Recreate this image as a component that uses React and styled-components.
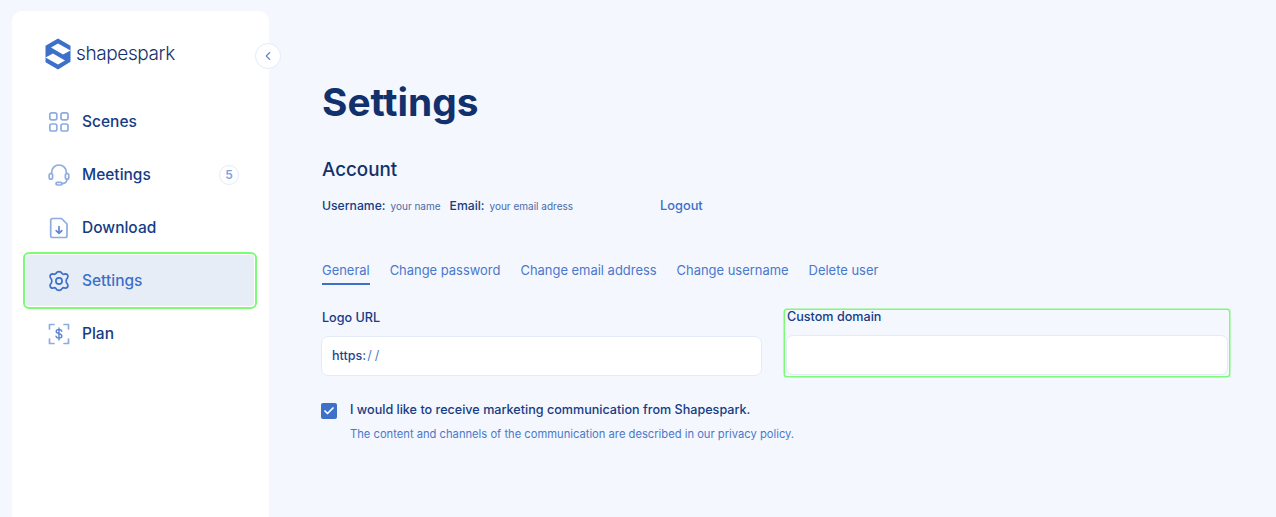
import React from "react";
import styled, { createGlobalStyle } from "styled-components";
import { ChevronLeft, Check } from "lucide-react";

const GlobalStyle = createGlobalStyle`
  html, body {
    margin: 0;
    height: 100%;
    overflow: hidden;
    background: #f4f7fd;
    font-family: "Inter", "Noto Sans", sans-serif;
    color: #153c85;
  }
  * { box-sizing: border-box; }
`;

const LogoMark = () => (
  <svg width="26" height="32" viewBox="0 0 26 32">
    <path fill="#3d70c9" d="M13 0.5 25.5 7.7V12.5L13 5.6 6 9.6 18 16.5 25.5 12.5V23.7L13 31.5 0.5 24.3V19.5L13 26.4 20 22.4 8 15.5 0.5 19.5V7.7Z" />
  </svg>
);

const ScenesIcon = () => (
  <svg width="22" height="22" viewBox="0 0 22 22" fill="none" stroke="#8eacdf" strokeWidth="1.7">
    <rect x="1.8" y="1.8" width="7" height="7" rx="1.8" />
    <rect x="13" y="1.8" width="7" height="7" rx="1.8" />
    <rect x="1.8" y="13" width="7" height="7" rx="1.8" />
    <rect x="13" y="13" width="7" height="7" rx="1.8" />
  </svg>
);

const MeetingsIcon = () => (
  <svg width="22" height="22" viewBox="0 0 22 22" fill="none" stroke="#8eacdf" strokeWidth="1.7" strokeLinecap="round">
    <path d="M3.6 9.5V8.4a7.4 7.4 0 0 1 14.8 0v1.1" />
    <rect x="1.2" y="9.5" width="3.4" height="5.6" rx="1.7" />
    <rect x="17.4" y="9.5" width="3.4" height="5.6" rx="1.7" />
    <path d="M19 15.2c0 2.6-2 4.2-5 4.4" />
    <rect x="8" y="18.4" width="6" height="2.6" rx="1.3" />
  </svg>
);

const DownloadIcon = () => (
  <svg width="22" height="22" viewBox="0 0 22 22" fill="none" stroke="#8eacdf" strokeWidth="1.7" strokeLinecap="round" strokeLinejoin="round">
    <path d="M4.5 1.5H13.5l5.5 5.5v11.7a1.8 1.8 0 0 1-1.8 1.8H4.5a1.8 1.8 0 0 1-1.8-1.8V3.3a1.8 1.8 0 0 1 1.8-1.8Z" />
    <path d="M11 9.5v6.8M8.2 13.6 11 16.4l2.8-2.8" stroke="#5f88d2" />
  </svg>
);

const GearIcon = () => (
  <svg width="22" height="22" viewBox="0 0 22 22" fill="none" stroke="#3d70c9" strokeWidth="1.7" strokeLinejoin="round">
    <path d="M8.9 2.2Q11 1 13.1 2.2L14.2 3.6Q14.8 4.4 15.7 4.3L17.3 3.9Q19.5 3.8 19.9 6 20.1 7 19.4 8L18.5 9.2Q17.8 11 18.5 12.8L19.4 14Q20.1 15 19.9 16 19.5 18.2 17.3 18.1L15.7 17.7Q14.8 17.6 14.2 18.4L13.1 19.8Q11 21 8.9 19.8L7.8 18.4Q7.2 17.6 6.3 17.7L4.7 18.1Q2.5 18.2 2.1 16 1.9 15 2.6 14L3.5 12.8Q4.2 11 3.5 9.2L2.6 8Q1.9 7 2.1 6 2.5 3.8 4.7 3.9L6.3 4.3Q7.2 4.4 7.8 3.6Z" />
    <circle cx="11" cy="11" r="3.1" />
  </svg>
);

const PlanIcon = () => (
  <svg width="22" height="22" viewBox="0 0 22 22" fill="none" stroke="#8eacdf" strokeWidth="1.7" strokeLinecap="round" strokeLinejoin="round">
    <path d="M6 1.5H1.5V6M16 1.5h4.5V6M6 20.5H1.5V16M16 20.5h4.5V16" />
    <path d="M13.8 8.2c-.3-1.1-1.4-1.7-2.8-1.7-1.6 0-2.8.8-2.8 2.1 0 2.9 5.7 1.5 5.7 4.4 0 1.3-1.3 2.1-2.9 2.1-1.5 0-2.7-.7-3-1.8M11 4.9v12.2" stroke="#5f88d2" strokeWidth="1.4" />
  </svg>
);

const NAV = [
  { label: "Scenes", icon: <ScenesIcon /> },
  { label: "Meetings", icon: <MeetingsIcon />, badge: 5 },
  { label: "Download", icon: <DownloadIcon /> },
  { label: "Settings", icon: <GearIcon />, active: true },
  { label: "Plan", icon: <PlanIcon /> },
];

const TABS = ["General", "Change password", "Change email address", "Change username", "Delete user"];

const App = () => {
  return (
    <Page>
      <GlobalStyle />
      <Sidebar>
        <Brand>
          <LogoMark />
          <Wordmark>shapespark</Wordmark>
        </Brand>
        <CollapseButton>
          <ChevronLeft size={14} strokeWidth={2} color="#5f88d2" />
        </CollapseButton>
        <Nav>
          {NAV.map((item) => (
            <NavItem key={item.label} $active={item.active}>
              <NavIcon>{item.icon}</NavIcon>
              <NavLabel>{item.label}</NavLabel>
              {item.badge && <Badge>{item.badge}</Badge>}
            </NavItem>
          ))}
        </Nav>
      </Sidebar>
      <Main>
        <Title>Settings</Title>
        <Heading>Account</Heading>
        <AccountRow>
          <strong>Username:</strong>
          <small>your name</small>
          <strong>Email:</strong>
          <small>your email adress</small>
          <Logout href="#">Logout</Logout>
        </AccountRow>
        <Tabs>
          {TABS.map((tab, i) => (
            <Tab key={tab} $active={i === 0}>{tab}</Tab>
          ))}
        </Tabs>
        <Fields>
          <Field>
            <FieldLabel>Logo URL</FieldLabel>
            <Input>https:<Slashes>//</Slashes></Input>
          </Field>
          <DomainField>
            <DomainLabel>Custom domain</DomainLabel>
            <Input />
          </DomainField>
        </Fields>
        <Consent>
          <CheckBox><Check size={12} strokeWidth={3.5} color="#fff" /></CheckBox>
          <ConsentText>I would like to receive marketing communication from Shapespark.</ConsentText>
        </Consent>
        <Note>The content and channels of the communication are described in our privacy policy.</Note>
      </Main>
    </Page>
  );
};

const Page = styled.div`
  display: flex;
  height: 517px;
  padding: 11px 0 0 12px;
`;
const Sidebar = styled.aside`
  position: relative;
  flex: 0 0 257px;
  padding: 27px 14px 0 13px;
  background: #fff;
  border-radius: 10px 10px 0 0;
`;
const Brand = styled.div`
  display: flex;
  align-items: center;
  gap: 5px;
  height: 32px;
  padding-left: 20px;
`;
const Wordmark = styled.span`
  padding-bottom: 2px;
  font-size: 19px;
  font-weight: 300;
  letter-spacing: -0.4px;
  color: #12326f;
`;
const CollapseButton = styled.button`
  position: absolute;
  top: 32px;
  right: -12px;
  display: flex;
  align-items: center;
  justify-content: center;
  width: 26px;
  height: 26px;
  padding: 0;
  background: #fff;
  border: 1px solid #e3ebf9;
  border-radius: 50%;
`;
const Nav = styled.nav`
  display: flex;
  flex-direction: column;
  margin-top: 25px;
`;
const NavItem = styled.a`
  display: flex;
  align-items: center;
  gap: 12px;
  height: 53px;
  padding: 0 15px 0 22px;
  border: 1px solid ${(p) => (p.$active ? "#fff" : "transparent")};
  border-radius: 4px;
  color: ${(p) => (p.$active ? "#3d70c9" : "#153c85")};
  background: ${(p) => (p.$active ? "#e7edf7" : "transparent")};
  outline: ${(p) => (p.$active ? "2px solid #7dfb76" : "none")};
`;
const NavIcon = styled.span`
  display: flex;
  width: 22px;
`;
const NavLabel = styled.span`
  flex: 1;
  font-size: 15.5px;
  font-weight: 500;
`;
const Badge = styled.span`
  display: flex;
  align-items: center;
  justify-content: center;
  width: 20px;
  height: 20px;
  border: 1px solid #e3ebf9;
  border-radius: 50%;
  font-size: 12px;
  font-weight: 600;
  color: #7f9fdb;
`;
const Main = styled.main`
  flex: 1;
  padding: 63px 46px 0 52px;
`;
const Title = styled.h1`
  margin: 0 0 0 1px;
  font-size: 38.8px;
  line-height: 56px;
  font-weight: 700;
  color: #12306b;
`;
const Heading = styled.h2`
  margin: 27px 0 0 1px;
  font-size: 18.8px;
  line-height: 26px;
  font-weight: 500;
  color: #12306b;
`;
const AccountRow = styled.div`
  display: flex;
  align-items: baseline;
  margin: 15px 0 0 1px;
  height: 16px;
  font-size: 12.2px;
  strong { font-weight: 500; color: #153c85; margin-right: 5px; }
  small { font-size: 10px; color: #4b6aa8; margin-right: 9px; }
`;
const Logout = styled.a`
  margin-left: 78px;
  font-size: 12.8px;
  font-weight: 500;
  text-decoration: none;
  color: #3d70c9;
`;
const Tabs = styled.div`
  display: flex;
  gap: 20px;
  margin: 45px 0 0 1px;
`;
const Tab = styled.a`
  height: 26px;
  padding-top: 3px;
  font-size: 12.95px;
  line-height: 16px;
  color: #4a78cc;
  border-bottom: ${(p) => (p.$active ? "2px solid #3d70c9" : "none")};
`;
const Fields = styled.div`
  display: grid;
  grid-template-columns: 441px 444px;
  gap: 23px;
  margin-top: 24px;
`;
const Field = styled.div`
  display: flex;
  flex-direction: column;
`;
const FieldLabel = styled.label`
  padding: 1px 0 0 1px;
  font-size: 12.6px;
  line-height: 16px;
  font-weight: 450;
  margin-bottom: 10px;
`;
const DomainField = styled(Field)`
  margin-top: 1px;
  padding: 0 1px 1px;
  box-shadow: 0 0 0 1.5px #7dfb76;
  border-radius: 2px;
`;
const DomainLabel = styled(FieldLabel)`
  padding: 0 0 0 1px;
  line-height: 14px;
  margin-bottom: 11px;
`;
const Input = styled.div`
  height: 40px;
  padding: 0 10px;
  background: #fff;
  border: 1px solid #e3ebf9;
  border-radius: 7px;
  font-size: 12.6px;
  line-height: 38px;
  font-weight: 500;
  color: #1d468f;
`;
const Slashes = styled.span`
  margin-left: 1px;
  letter-spacing: 3px;
  font-weight: 400;
  color: #4a78cc;
`;
const Consent = styled.div`
  display: flex;
  align-items: center;
  gap: 13px;
  margin-top: 26px;
`;
const CheckBox = styled.span`
  display: flex;
  align-items: center;
  justify-content: center;
  width: 16px;
  height: 16px;
  background: #3d70c9;
  border-radius: 2px;
`;
const ConsentText = styled.span`
  padding-bottom: 3px;
  font-size: 12.6px;
  font-weight: 450;
  color: #153c85;
`;
const Note = styled.p`
  margin: 7px 0 0 29px;
  font-size: 11.2px;
  line-height: 14px;
  color: #4a78cc;
`;

export default App;
